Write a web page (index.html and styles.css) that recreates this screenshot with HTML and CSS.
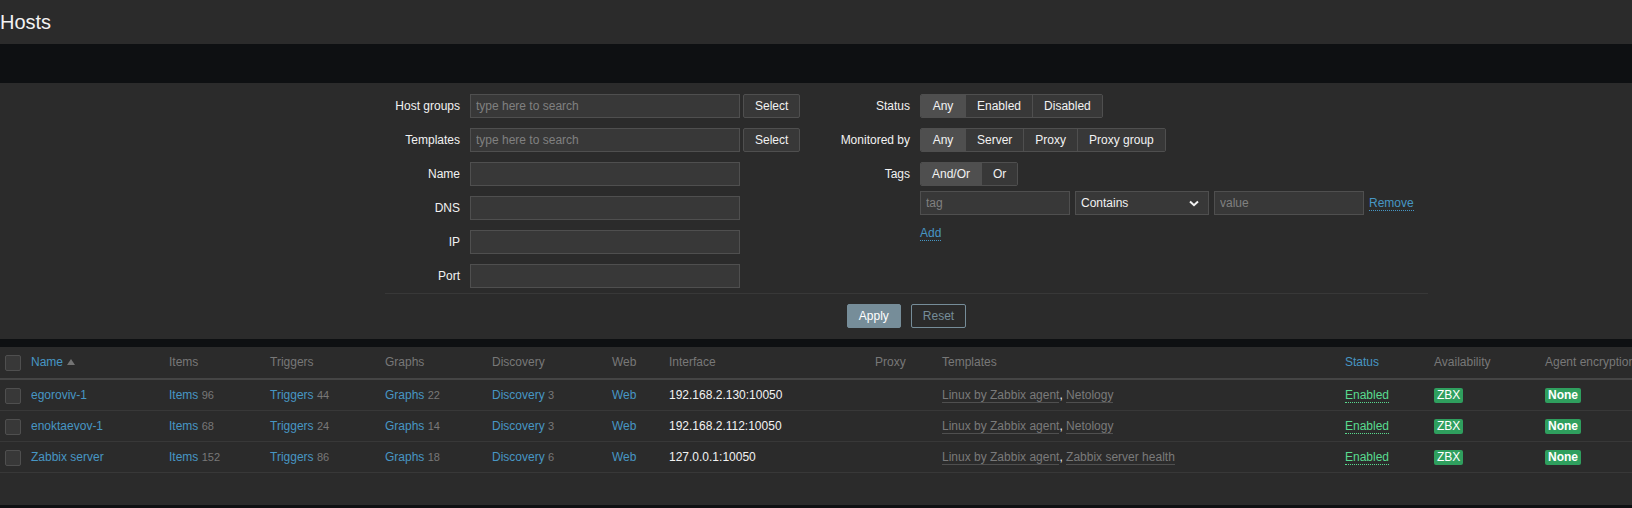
FILE: index.html
```html
<!DOCTYPE html>
<html lang="en">
<head>
<meta charset="utf-8">
<title>Hosts</title>
<link rel="stylesheet" href="styles.css">
</head>
<body>
<header class="page-header"><h1>Hosts</h1></header>
<div class="filter-tabs"></div>
<section class="filter">
  <form class="filter-form">
    <div class="filter-cols">
      <div class="col col-left">
        <div class="f-row"><label class="f-label">Host groups</label><input class="inp inp-ms" placeholder="type here to search"><button type="button" class="btn-grey">Select</button></div>
        <div class="f-row"><label class="f-label">Templates</label><input class="inp inp-ms" placeholder="type here to search"><button type="button" class="btn-grey">Select</button></div>
        <div class="f-row"><label class="f-label">Name</label><input class="inp inp-ms"></div>
        <div class="f-row"><label class="f-label">DNS</label><input class="inp inp-ms"></div>
        <div class="f-row"><label class="f-label">IP</label><input class="inp inp-ms"></div>
        <div class="f-row"><label class="f-label">Port</label><input class="inp inp-ms"></div>
      </div>
      <div class="col col-right">
        <div class="f-row"><label class="f-label">Status</label>
          <div class="seg"><span class="on">Any</span><span>Enabled</span><span>Disabled</span></div>
        </div>
        <div class="f-row"><label class="f-label">Monitored by</label>
          <div class="seg"><span class="on">Any</span><span>Server</span><span>Proxy</span><span>Proxy group</span></div>
        </div>
        <div class="f-row f-row-tags"><label class="f-label">Tags</label>
          <div class="seg"><span class="on">And/Or</span><span>Or</span></div>
        </div>
        <div class="tag-row">
          <input class="inp inp-tag" placeholder="tag">
          <div class="sel">Contains<svg class="chev" width="10" height="7" viewBox="0 0 10 7"><path d="M1 1.5 L5 5.2 L9 1.5" fill="none" stroke="#f2f2f2" stroke-width="2"/></svg></div>
          <input class="inp inp-tag" placeholder="value">
          <a class="link-dot">Remove</a>
        </div>
        <div class="add-row"><a class="link-dot">Add</a></div>
      </div>
    </div>
    <div class="filter-buttons">
      <button type="button" class="btn-apply">Apply</button>
      <button type="button" class="btn-reset">Reset</button>
    </div>
  </form>
</section>
<section class="list">
  <table class="list-table">
    <colgroup>
      <col class="c-cb"><col class="c-name"><col class="c-items"><col class="c-trig"><col class="c-graph"><col class="c-disc"><col class="c-web"><col class="c-if"><col class="c-proxy"><col class="c-tpl"><col class="c-status"><col class="c-avail"><col class="c-enc">
    </colgroup>
    <thead>
      <tr>
        <th><span class="cb"></span></th>
        <th><a class="link">Name</a><span class="arrow-up"></span></th>
        <th>Items</th>
        <th>Triggers</th>
        <th>Graphs</th>
        <th>Discovery</th>
        <th>Web</th>
        <th>Interface</th>
        <th>Proxy</th>
        <th>Templates</th>
        <th><a class="link">Status</a></th>
        <th>Availability</th>
        <th>Agent encryption</th>
      </tr>
    </thead>
    <tbody>
      <tr>
        <td><span class="cb"></span></td>
        <td><a class="link">egoroviv-1</a></td>
        <td><a class="link">Items</a> <sup class="cnt">96</sup></td>
        <td><a class="link">Triggers</a> <sup class="cnt">44</sup></td>
        <td><a class="link">Graphs</a> <sup class="cnt">22</sup></td>
        <td><a class="link">Discovery</a> <sup class="cnt">3</sup></td>
        <td><a class="link">Web</a></td>
        <td>192.168.2.130:10050</td>
        <td></td>
        <td><a class="link-alt">Linux by Zabbix agent</a>, <a class="link-alt">Netology</a></td>
        <td><a class="enabled">Enabled</a></td>
        <td><span class="badge">ZBX</span></td>
        <td><span class="badge badge-b">None</span></td>
      </tr>
      <tr>
        <td><span class="cb"></span></td>
        <td><a class="link">enoktaevov-1</a></td>
        <td><a class="link">Items</a> <sup class="cnt">68</sup></td>
        <td><a class="link">Triggers</a> <sup class="cnt">24</sup></td>
        <td><a class="link">Graphs</a> <sup class="cnt">14</sup></td>
        <td><a class="link">Discovery</a> <sup class="cnt">3</sup></td>
        <td><a class="link">Web</a></td>
        <td>192.168.2.112:10050</td>
        <td></td>
        <td><a class="link-alt">Linux by Zabbix agent</a>, <a class="link-alt">Netology</a></td>
        <td><a class="enabled">Enabled</a></td>
        <td><span class="badge">ZBX</span></td>
        <td><span class="badge badge-b">None</span></td>
      </tr>
      <tr>
        <td><span class="cb"></span></td>
        <td><a class="link">Zabbix server</a></td>
        <td><a class="link">Items</a> <sup class="cnt">152</sup></td>
        <td><a class="link">Triggers</a> <sup class="cnt">86</sup></td>
        <td><a class="link">Graphs</a> <sup class="cnt">18</sup></td>
        <td><a class="link">Discovery</a> <sup class="cnt">6</sup></td>
        <td><a class="link">Web</a></td>
        <td>127.0.0.1:10050</td>
        <td></td>
        <td><a class="link-alt">Linux by Zabbix agent</a>, <a class="link-alt">Zabbix server health</a></td>
        <td><a class="enabled">Enabled</a></td>
        <td><span class="badge">ZBX</span></td>
        <td><span class="badge badge-b">None</span></td>
      </tr>
    </tbody>
  </table>
  <div class="paging"></div>
</section>
</body>
</html>
```
FILE: styles.css
```css
* { box-sizing: border-box; }
html, body { margin: 0; padding: 0; }
body {
  background: #0e1012;
  font-family: "Liberation Sans", Arial, sans-serif;
  font-size: 12px;
  color: #f2f2f2;
  width: 1632px;
  height: 508px;
  overflow: hidden;
}

/* header */
.page-header {
  height: 44px;
  background: #2b2b2b;
  display: flex;
  align-items: center;
}
.page-header h1 {
  margin: 0;
  font-size: 20px;
  font-weight: normal;
  line-height: 24px;
  color: #f2f2f2;
}
.filter-tabs {
  height: 39px;
  background: #0e1012;
}

/* filter */
.filter {
  background: #2b2b2b;
  padding: 11px 0 11px 385px;
}
.filter-form { width: 1043px; }
.filter-cols {
  display: flex;
  align-items: flex-start;
  padding-bottom: 5px;
  border-bottom: 1px solid #383838;
}
.col-left { width: 445px; }
.col-right { flex: 1; }
.f-row {
  display: flex;
  align-items: center;
  height: 24px;
  margin-bottom: 10px;
}
.col-left .f-row:last-child { margin-bottom: 0; }
.f-label {
  width: 75px;
  margin-right: 10px;
  text-align: right;
  white-space: nowrap;
}
.col-right .f-label { width: 80px; }
.f-row-tags { margin-bottom: 5px; }

.inp {
  height: 24px;
  background: #383838;
  border: 1px solid #4f4f4f;
  color: #f2f2f2;
  font-family: inherit;
  font-size: 12px;
  padding: 0 5px;
  outline: none;
  margin: 0;
}
.inp::placeholder { color: #808080; opacity: 1; }
.inp-ms { width: 270px; }
.inp-tag { width: 150px; }

.btn-grey {
  height: 24px;
  margin: 0 0 0 3px;
  padding: 0 11px;
  background: #383838;
  border: 1px solid #4f4f4f;
  border-radius: 2px;
  color: #f2f2f2;
  font-family: inherit;
  font-size: 12px;
}

.seg {
  display: flex;
  height: 24px;
  border: 1px solid #4f4f4f;
  border-radius: 2px;
  overflow: hidden;
}
.seg span {
  padding: 0 11px;
  line-height: 22px;
  background: #383838;
  border-left: 1px solid #4f4f4f;
  white-space: nowrap;
}
.seg span:first-child { border-left: 0; }
.seg span.on { background: #4f4f4f; min-width: 44px; text-align: center; }

.tag-row {
  display: flex;
  align-items: center;
  gap: 5px;
  margin-left: 90px;
  height: 24px;
}
.sel {
  width: 134px;
  height: 24px;
  background: #383838;
  border: 1px solid #4f4f4f;
  display: flex;
  align-items: center;
  justify-content: space-between;
  padding: 0 9px 0 5px;
}
.chev { display: block; }
.link-dot {
  color: #4796c4;
  border-bottom: 1px dotted #4796c4;
  line-height: 14px;
  cursor: pointer;
}
.add-row {
  margin: 10px 0 0 90px;
  height: 16px;
  display: flex;
  align-items: center;
}

.filter-buttons {
  display: flex;
  justify-content: center;
  gap: 10px;
  padding-top: 10px;
}
.btn-apply, .btn-reset {
  height: 24px;
  padding: 0 11px;
  border-radius: 2px;
  font-family: inherit;
  font-size: 12px;
  margin: 0;
}
.btn-apply {
  background: #768d99;
  border: 1px solid #768d99;
  color: #ffffff;
}
.btn-reset {
  background: transparent;
  border: 1px solid #768d99;
  color: #768d99;
}

/* list */
.list {
  margin-top: 8px;
  background: #2b2b2b;
  overflow: hidden;
  height: 158px;
}
.list-table {
  table-layout: fixed;
  border-collapse: separate;
  border-spacing: 0;
  width: 1700px;
}
.c-cb { width: 26px; }
.c-name { width: 138px; }
.c-items { width: 101px; }
.c-trig { width: 115px; }
.c-graph { width: 107px; }
.c-disc { width: 120px; }
.c-web { width: 57px; }
.c-if { width: 206px; }
.c-proxy { width: 67px; }
.c-tpl { width: 403px; }
.c-status { width: 89px; }
.c-avail { width: 111px; }
.c-enc { width: 160px; }

.list-table th {
  padding: 0 5px;
  line-height: 31px;
  text-align: left;
  font-weight: normal;
  color: #787878;
  border-bottom: 2px solid #454545;
  white-space: nowrap;
  vertical-align: middle;
}
.list-table td {
  padding: 0 5px;
  line-height: 30px;
  border-bottom: 1px solid #383838;
  white-space: nowrap;
  vertical-align: middle;
}
.cb {
  display: inline-block;
  width: 16px;
  height: 16px;
  border: 1px solid #4f4f4f;
  background: #383838;
  border-radius: 2px;
  vertical-align: middle;
}
.link { color: #4796c4; text-decoration: none; }
.arrow-up {
  display: inline-block;
  width: 0;
  height: 0;
  margin-left: 4px;
  border-left: 4px solid transparent;
  border-right: 4px solid transparent;
  border-bottom: 6px solid #737373;
  vertical-align: 1px;
}
.cnt {
  font-size: 11px;
  color: #787878;
  vertical-align: baseline;
  line-height: 1;
}
.link-alt {
  color: #7a7a7a;
  border-bottom: 1px solid #4f4f4f;
  line-height: 14px;
}
.enabled {
  color: #59db8f;
  border-bottom: 1px dotted #59db8f;
  line-height: 14px;
}
.badge {
  display: inline-block;
  line-height: 15px;
  height: 15px;
  padding: 0 3px;
  background: #2f9f5e;
  color: #ffffff;
  border-radius: 2px;
  vertical-align: middle;
}
.badge-b { font-weight: bold; }
.paging { height: 32px; }
```
